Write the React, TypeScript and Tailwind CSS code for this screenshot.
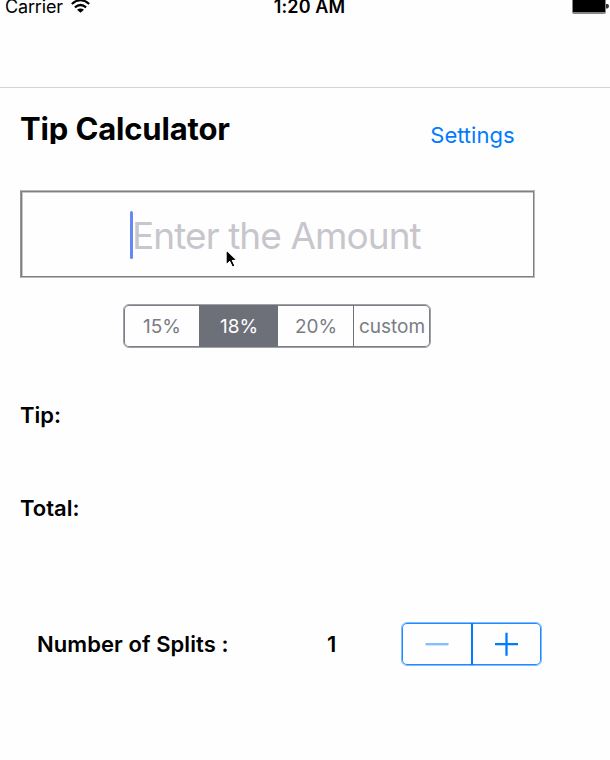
function StatusBar() {
  return (
    <header className="grid h-[88px] grid-cols-[1fr_auto_1fr] items-start border-b border-[#d4d4d4] text-[18px] leading-[14px]">
      <div className="flex gap-[8px] pl-[5px]">
        <span className="w-[58px] whitespace-nowrap tracking-[-0.15px]">Carrier</span>
        <svg width="19" height="14" viewBox="0 0 19 14" fill="none" stroke="#000" strokeWidth="2.2">
          <path d="M.8 4Q9.5 -3.6 18.2 4M3.9 7.4Q9.5 2.6 15.1 7.4" />
          <path d="M6 9.8Q9.5 7.2 13 9.8L9.5 12.8Z" fill="#000" stroke="none" />
        </svg>
      </div>
      <span className="pl-[9px] font-semibold tracking-[0.15px]">1:20 AM</span>
      <svg className="justify-self-end" width="38" height="14" viewBox="0 0 38 14">
        <path d="M0 0H34V12Q34 14 32 14H2Q0 14 0 12Z" fill="#858585" />
        <path d="M1 0H33V12H1Z" />
        <path d="M34 4H35.5Q37 4.5 37 6T35.5 8.5H34Z" fill="#333" />
      </svg>
    </header>
  );
}

function AmountField() {
  return (
    <div className="relative ml-[20px] flex h-[88px] w-[515px] border border-[#b9bbb9] border-l-[#969696] pl-[109px] pt-[20px] shadow-[inset_0_0_0_1px_#808080,inset_2px_2px_0_0_#c6c8c6]">
      <div className="h-[48px] w-[3px] rounded-full bg-[#6488f8]" />
      <span className="-ml-[1px] whitespace-nowrap text-[37px] leading-[50px] tracking-[-0.93px] text-[#c7c6cc]">Enter the Amount</span>
      <svg className="absolute left-[203px] top-[57px]" width="16" height="22" viewBox="0 0 16 22">
        <path d="M2 2V17L5.7 13.6L8.4 19.2L11 18L8.4 12.5H13Z" stroke="#fff" strokeWidth="1.4" />
        <path d="M3 3.5V15L6 12.3L9 18.2L10 17.7L7.3 11.8H11.5Z" />
      </svg>
    </div>
  );
}

function TipSegments() {
  return (
    <div className="ml-[123px] mt-[26px] flex h-[44px] w-[308px] overflow-hidden rounded-[6px] border border-[#a0a1a6] text-[19px] leading-[43px] text-[#7b7c83] shadow-[inset_0_0_0_1px_#7d7f86]">
      <button className="w-[75px] pl-[1px]">15%</button>
      <button className="w-[79px] bg-[#6d7079] pl-[1px] text-white">18%</button>
      <button className="w-[76px] border-r border-[#6f7179] pl-[1px]">20%</button>
      <button className="flex-1 whitespace-nowrap">custom</button>
    </div>
  );
}

function Stepper() {
  return (
    <div className="flex h-[44px] w-[141px] rounded-[6px] border border-[#80bcff] shadow-[inset_0_0_0_1px_#1f8aff]">
      <button className="flex w-[69px] items-center justify-center">
        <svg width="24" height="24" viewBox="0 0 24 24"><path d="M0.5 12.2H23.5" stroke="#80bcff" strokeWidth="2.3" /></svg>
      </button>
      <div className="w-[1.5px] bg-[#007aff]" />
      <button className="flex flex-1 items-center justify-center">
        <svg width="24" height="24" viewBox="0 0 24 24"><path d="M0 12.2H23M11.5 0.7V23.7" stroke="#007aff" strokeWidth="2.3" /></svg>
      </button>
    </div>
  );
}

export default function App() {
  return (
    <main className="flex h-[760px] w-[610px] flex-col overflow-hidden bg-[#fefefe] font-['Inter',sans-serif] text-black">
      <StatusBar />
      <div className="flex h-[102px] items-start justify-between pl-[20px] pr-[95.5px] pt-[22px]">
        <h1 className="h-[34px] overflow-hidden text-[31px] font-bold leading-[38px] tracking-[-0.15px]">Tip Calculator</h1>
        <a className="pt-[11px] text-[22px] leading-[28px] text-[#007aff]">Settings</a>
      </div>
      <AmountField />
      <TipSegments />
      <div className="ml-[20px] mt-[53px] flex flex-col gap-[65px] text-[22px] font-semibold leading-[28px]">
        <p>Tip:</p>
        <p>Total:</p>
      </div>
      <div className="mt-[100px] flex h-[44px] items-center pl-[37px] text-[22px] font-semibold">
        <span className="w-[290px] whitespace-nowrap tracking-[0.07px]">Number of Splits :</span>
        <span className="w-[74px]">1</span>
        <Stepper />
      </div>
    </main>
  );
}
